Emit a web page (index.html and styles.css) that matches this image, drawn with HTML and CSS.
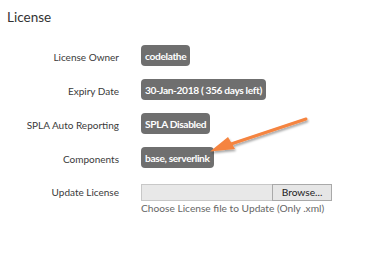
FILE: index.html
```html
<!DOCTYPE html>
<html lang="en">
<head>
    <meta charset="UTF-8">
    <meta name="viewport" content="width=device-width, initial-scale=1.0">
    <title>License</title>
    <link rel="stylesheet" href="styles.css">
</head>
<body>

<div class="panel">
    <h2 class="title">License</h2>

    <div class="form">
        <div class="label">License Owner</div>
        <div class="value"><span class="badge">codelathe</span></div>

        <div class="label">Expiry Date</div>
        <div class="value"><span class="badge">30-Jan-2018 ( 356 days left)</span></div>

        <div class="label">SPLA Auto Reporting</div>
        <div class="value"><span class="badge">SPLA Disabled</span></div>

        <div class="label">Components</div>
        <div class="value"><span class="badge">base, serverlink</span></div>

        <div class="label label-file">Update License</div>
        <div class="value value-file">
            <div class="file">
                <div class="file-name"></div>
                <div class="file-btn">Browse...</div>
            </div>
            <div class="hint">Choose License file to Update (Only .xml)</div>
        </div>
    </div>

    <!-- стрелка поверх формы -->
    <svg class="arrow" width="110" height="50" viewBox="0 0 110 50">
        <defs>
            <filter id="sh" x="-20%" y="-40%" width="140%" height="180%">
                <feDropShadow dx="1" dy="2" stdDeviation="1.2" flood-color="#000" flood-opacity="0.35"/>
            </filter>
        </defs>
        <g filter="url(#sh)">
            <line x1="106" y1="9" x2="28" y2="35" stroke="#f5843f" stroke-width="3" stroke-linecap="round"/>
            <polygon points="10,41.5 28,27 35,39" fill="#f5843f"/>
        </g>
    </svg>
</div>

</body>
</html>
```

FILE: styles.css
```css
body {
    margin: 0;
    background-color: #fff;
    font-family: 'Lato', 'Open Sans', sans-serif;
    color: #333;
}
.panel {
    position: relative;
    padding: 7px 7px 0 7px;
}
.title {
    margin: 0;
    font-size: 13.5px;
    font-weight: normal;
    color: #333;
    line-height: 20px;
}
.form {
    display: grid;
    grid-template-columns: 112px 1fr;
    column-gap: 22px;
    row-gap: 12px;
    margin-top: 17px;
    align-items: center;
}
.label {
    text-align: right;
    font-size: 10px;
    color: #3a3a3a;
    padding-top: 3px;
}
.badge {
    display: inline-block;
    background-color: #6f6f6f;
    color: #fff;
    font-size: 10.2px;
    font-weight: bold;
    letter-spacing: -0.35px;
    line-height: 14px;
    padding: 4px 4px 3px 4px;
    border-radius: 4px;
}
.label-file {
    align-self: start;
    padding-top: 6px;
}
.value-file {
    margin-top: 4px;
}
.file {
    display: flex;
    width: 191px;
    height: 17px;
}
.file-name {
    flex: 1;
    background-color: #e8e8e8;
    border: 1px solid #c8c8c8;
    border-right: none;
}
.file-btn {
    width: 58px;
    background-color: #e6e6e6;
    border: 1px solid #a9a9a9;
    font-size: 10.2px;
    line-height: 15px;
    text-align: center;
    color: #222;
}
.hint {
    margin-top: 1px;
    font-size: 10.2px;
    color: #666;
}
.arrow {
    position: absolute;
    left: 200px;
    top: 110px;
}
```
